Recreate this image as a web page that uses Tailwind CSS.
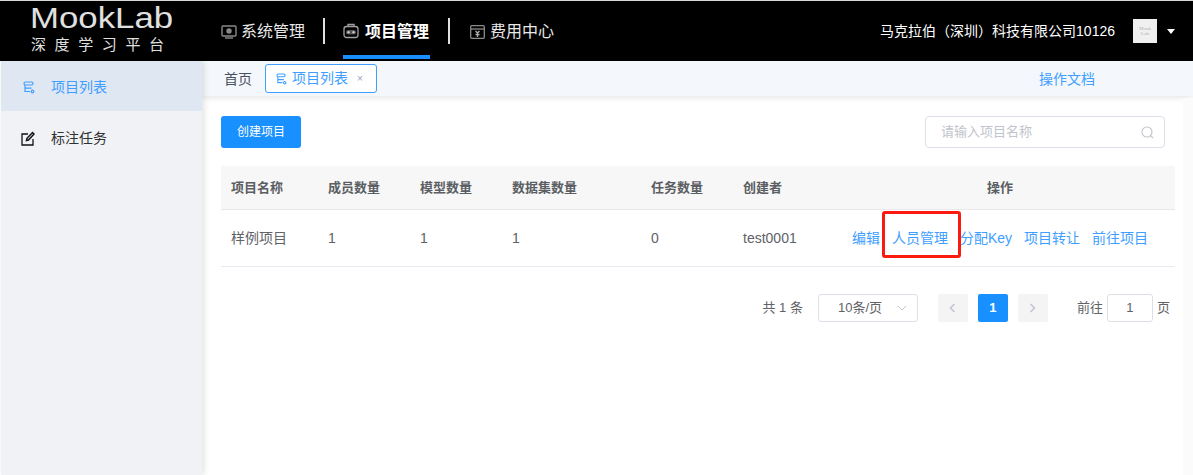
<!DOCTYPE html>
<html lang="zh-CN">
<head>
  <meta charset="UTF-8" />
  <title>MookLab 深度学习平台</title>
  <script src="https://cdn.jsdelivr.net/npm/@tailwindcss/browser@4"></script>
</head>
<body class="w-[1193px] h-[475px] overflow-hidden bg-white font-['Liberation_Sans','Noto_Sans_CJK_SC',sans-serif] text-[#606266]">
  <div class="h-px bg-[#d8d8d8]"></div>

  <!-- Header -->
  <header class="h-[60px] bg-black flex items-center relative">
    <div class="w-[205px] h-full pl-[30px] text-[#e0e0e0] shrink-0">
      <div class="text-[29px] leading-[27px] pt-[4px] origin-left scale-x-[1.2] whitespace-nowrap">MookLab</div>
      <div class="text-[15px] leading-[20px] mt-[3px] pl-px tracking-[8.6px] whitespace-nowrap">深度学习平台</div>
    </div>
    <nav class="flex items-center h-full text-white">
      <div class="flex items-center gap-[4px] pl-[16px] w-[118px] text-[#e8e8e8] text-[16px] pt-px">
        <svg width="16" height="14" viewBox="0 0 16 14" fill="none" stroke="#8a8a8a" stroke-width="1.4"><rect x="1" y="1" width="14" height="10" rx="1"/><circle cx="8" cy="6" r="2" fill="#8a8a8a"/><path d="M4 13h8"/></svg>
        <span>系统管理</span>
      </div>
      <div class="w-[2px] h-[26px] bg-[#e0e0e0]"></div>
      <div class="relative h-full flex items-center gap-[6px] ml-[18px] w-[87px] text-[16px] font-bold text-white">
        <svg width="16" height="16" viewBox="0 0 16 16" fill="none" stroke="#a0a0a0" stroke-width="1.3" class="shrink-0"><rect x="1" y="3.5" width="14" height="11" rx="2.5"/><path d="M5 3.5V1.500h6v2"/><rect x="3" y="7" width="10" height="4.500" rx="2.200" fill="#555" stroke="none"/><circle cx="5.500" cy="9.200" r="1.200" fill="#c8c8c8" stroke="none"/><circle cx="10.500" cy="9.200" r="1.200" fill="#c8c8c8" stroke="none"/></svg>
        <span class="whitespace-nowrap pt-px">项目管理</span>
        <div class="absolute left-0 right-0 bottom-[2px] h-[4px] bg-[#1890ff]"></div>
      </div>
      <div class="w-[2px] h-[26px] bg-[#e0e0e0] ml-[18px]"></div>
      <div class="flex items-center gap-[5px] ml-[20px] text-[#e8e8e8] text-[16px] pt-px">
        <svg width="15" height="14" viewBox="0 0 15 14" fill="none" stroke="#8a8a8a" stroke-width="1.3"><rect x="0.7" y="0.7" width="13.6" height="12.6" rx="1"/><path d="M1 4h13"/><path d="M5.5 6l2 2 2-2M7.5 8v4M5.5 9.5h4" stroke="#b0b0b0"/></svg>
        <span>费用中心</span>
      </div>
    </nav>
    <div class="ml-auto flex items-center text-white text-[14px]">
      <span>马克拉伯（深圳）科技有限公司10126</span>
      <div class="w-6 h-6 ml-[18px] bg-[#f0f0f0] flex flex-col items-center justify-center text-[5px] leading-[5px] text-[#b0b0b0] font-['Liberation_Serif']"><span>Mook</span><span>Lab</span></div>
      <div class="ml-[10px] mr-[18px] w-0 h-0 border-x-[4px] border-x-transparent border-t-[5px] border-t-white"></div>
    </div>
  </header>

  <div class="flex h-[414px]">
    <!-- Sidebar -->
    <aside class="w-[201px] ml-px h-full bg-[#f0f2f5] shadow-[2px_0_6px_rgba(0,0,0,0.12)] z-20 shrink-0">
      <div class="h-[50px] bg-[#dfe7f2] flex items-center pl-[22px] pt-[2px] text-[14px] text-[#409eff]">
        <svg width="12" height="13" viewBox="0 0 12 13" fill="none" stroke="#409eff" stroke-width="1.2"><rect x="1" y="1" width="9" height="3" rx="1.500"/><path d="M2 4v6.500h5M2 7.200h6.500"/><circle cx="9.500" cy="10.500" r="1.300"/></svg>
        <span class="ml-[16px]">项目列表</span>
      </div>
      <div class="h-[54px] flex items-center pl-[20px] text-[14px] text-[#303133]">
        <svg width="14" height="15" viewBox="0 0 14 15" fill="none" stroke="#111" stroke-width="1.300"><path d="M7 3H1v11h11V8"/><path d="M5.500 9.500l.5-2.200L11.500 1.500l1.500 1.500L7.500 9z" stroke-width="1.500"/></svg>
        <span class="ml-[16px]">标注任务</span>
      </div>
    </aside>

    <main class="flex-1 min-w-0 h-full relative">
      <!-- Tabs bar -->
      <div class="h-[35px] bg-[#f4f7fc] shadow-[0_2px_6px_rgba(0,0,0,0.1)] flex items-center pl-[22px] text-[14px]">
        <span class="text-[#495060] pt-px">首页</span>
        <div class="ml-[13px] h-[29px] w-[112px] border border-[#409eff] rounded-[3px] bg-white flex items-center pl-[10px] text-[#409eff]">
          <svg width="11" height="12" viewBox="0 0 12 13" fill="none" stroke="#409eff" stroke-width="1.2"><rect x="1" y="1" width="9" height="3" rx="1.500"/><path d="M2 4v6.500h5M2 7.200h6.500"/><circle cx="9.500" cy="10.500" r="1.300"/></svg>
          <span class="ml-[5px]">项目列表</span>
          <span class="ml-[9px] text-[10px] text-[#9aa5b8]">×</span>
        </div>
        <a class="ml-[662px] text-[#409eff] pt-px">操作文档</a>
      </div>

      <!-- Content -->
      <div class="pl-[19px] pr-[18px]">
        <div class="flex justify-between items-center mt-[20px] h-[32px]">
          <button class="w-20 h-8 bg-[#1890ff] rounded-[3px] text-white text-[12px]">创建项目</button>
          <div class="w-[240px] h-8 mr-[10px] border border-[#dcdfe6] rounded-[4px] flex items-center justify-between pl-[15px] pr-[10px] text-[13px] text-[#c0c4cc]">
            <span>请输入项目名称</span>
            <svg width="13" height="13" viewBox="0 0 13 13" fill="none" stroke="#c0c4cc" stroke-width="1.100"><circle cx="6" cy="6" r="5"/><path d="M9.700 9.700l2.300 2.300"/></svg>
          </div>
        </div>

        <!-- Table -->
        <div class="mt-[18px] text-[13px]">
          <div class="grid grid-cols-[97px_92px_92px_139px_92px_92px_1fr] h-11 items-center bg-[#f7f7f7] border-b border-[#e6e8eb] font-bold text-[#5b5e63]">
            <div class="pl-[10px]">项目名称</div>
            <div class="pl-[10px]">成员数量</div>
            <div class="pl-[10px]">模型数量</div>
            <div class="pl-[10px]">数据集数量</div>
            <div class="pl-[10px]">任务数量</div>
            <div class="pl-[10px]">创建者</div>
            <div class="text-center">操作</div>
          </div>
          <div class="grid grid-cols-[97px_92px_92px_139px_92px_92px_1fr] h-[57px] items-center border-b border-[#e8e8f3] text-[14px] text-[#606266]">
            <div class="pl-[10px]">样例项目</div>
            <div class="pl-[10px]">1</div>
            <div class="pl-[10px]">1</div>
            <div class="pl-[10px]">1</div>
            <div class="pl-[10px]">0</div>
            <div class="pl-[10px]">test0001</div>
            <div class="flex pl-[27px] text-[#409eff] whitespace-nowrap">
              <span class="w-[40px]">编辑</span>
              <span class="w-[68px]">人员管理</span>
              <span class="w-[64px]">分配Key</span>
              <span class="w-[68px]">项目转让</span>
              <span>前往项目</span>
            </div>
          </div>
        </div>

        <!-- Pagination -->
        <div class="flex items-center justify-end mt-[27px] h-7 pr-[5px] text-[13px] text-[#606266]">
          <span>共 1 条</span>
          <div class="ml-[15px] w-[100px] h-7 border border-[#dcdfe6] rounded-[3px] flex items-center justify-between pl-[19px] pr-[10px]">
            <span>10条/页</span>
            <svg width="10" height="6" viewBox="0 0 10 6" fill="none" stroke="#c0c4cc"><path d="M1 1l4 4 4-4"/></svg>
          </div>
          <div class="ml-[20px] w-[30px] h-7 bg-[#f4f4f5] rounded-[2px] flex items-center justify-center">
            <svg width="7" height="10" viewBox="0 0 7 10" fill="none" stroke="#c0c4cc" stroke-width="1.500"><path d="M5.500 1l-4 4 4 4"/></svg>
          </div>
          <div class="ml-[10px] w-[30px] h-7 bg-[#1890ff] rounded-[2px] flex items-center justify-center text-white font-bold">1</div>
          <div class="ml-[10px] w-[30px] h-7 bg-[#f4f4f5] rounded-[2px] flex items-center justify-center">
            <svg width="7" height="10" viewBox="0 0 7 10" fill="none" stroke="#c0c4cc" stroke-width="1.500"><path d="M1.500 1l4 4-4 4"/></svg>
          </div>
          <span class="ml-[29px]">前往</span>
          <div class="ml-[4px] w-[46px] h-7 border border-[#dcdfe6] rounded-[3px] flex items-center justify-center">1</div>
          <span class="ml-[4px]">页</span>
        </div>
      </div>

      <!-- Faint strip on the right edge -->
      <div class="absolute right-0 top-[37px] bottom-0 w-[10px] bg-[#fbfbfb]"></div>

      <!-- Red annotation around 人员管理 -->
      <div class="absolute left-[680px] top-[150px] w-[79px] h-[47px] border-[3px] border-[#fb1a10] rounded-[3px]"></div>
    </main>
  </div>
</body>
</html>
